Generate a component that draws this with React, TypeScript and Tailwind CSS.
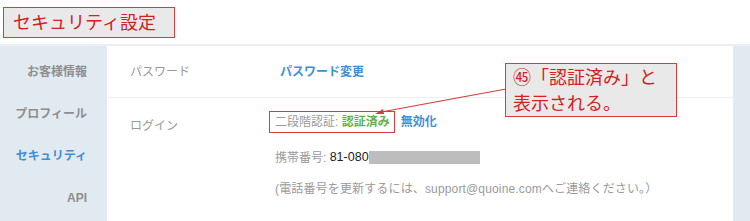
import React from 'react'

const jp = { fontFamily: '"Liberation Sans", "Noto Sans CJK JP", sans-serif' }

const navItems = [
  { label: 'お客様情報', active: false },
  { label: 'プロフィール', active: false },
  { label: 'セキュリティ', active: true },
  { label: 'API', active: false },
]

const App: React.FC = () => {
  return (
    <div className="relative w-[750px] h-[221px] overflow-hidden bg-white" style={jp}>
      {/* page title (annotated) */}
      <div className="h-[44px] pt-[7px] pl-[3px]">
        <div className="w-[172px] h-[31px] border border-[#d93b3b] bg-[#e9e9e9] flex items-center pl-[9px] text-[18px] text-[#d42020] leading-none">
          セキュリティ設定
        </div>
      </div>

      <div className="flex h-[177px] border-t-2 border-[#eceef1]">
        {/* sidebar */}
        <div className="w-[107px] bg-[#e2eaf1] flex flex-col items-end pr-[20px] pt-[5px]">
          {navItems.map((item) => (
            <div
              key={item.label}
              className={`h-[42px] flex items-center text-[12px] font-bold ${
                item.active ? 'text-[#3d8fd8]' : 'text-[#8e8e8e]'
              }`}
            >
              {item.label}
            </div>
          ))}
        </div>

        {/* content */}
        <div className="w-[626px] bg-white">
          <div className="h-[52px] flex items-center border-b border-[#eef0f2] pl-[23px] text-[12px]">
            <div className="w-[150px] text-[#9a9a9a]">パスワード</div>
            <div className="text-[#3d8fd8] font-bold">パスワード変更</div>
          </div>
          <div className="flex pl-[23px] pt-[13px] text-[12px]">
            <div className="w-[139px] pt-[6px] text-[#9a9a9a]">ログイン</div>
            <div className="flex flex-col">
              <div className="h-[22px] flex items-center">
                <span className="h-[22px] flex items-center border border-[#d93b3b] pl-[5px] pr-[4px]">
                  <span className="text-[#9a9a9a]">二段階認証:&nbsp;</span>
                  <span className="text-[#5fb34a] font-bold">認証済み</span>
                </span>
                <span className="ml-[6px] text-[#3d8fd8] font-bold">無効化</span>
              </div>
              <div className="h-[31px] mt-[9px] flex items-center pl-[6px]">
                <span className="text-[#9a9a9a]">携帯番号:&nbsp;</span>
                <span className="text-[#222] text-[12.5px]">81-080</span>
                <span className="w-[111px] h-[13px] bg-[#bdbdbd]" />
              </div>
              <div className="h-[31px] flex items-center pl-[6px] text-[#9a9a9a] tracking-[0.15px]">
                (電話番号を更新するには、support@quoine.comへご連絡ください。）
              </div>
            </div>
          </div>
        </div>

        <div className="flex-1 bg-[#e2eaf1]" />
      </div>

      {/* callout */}
      <svg className="absolute left-0 top-0 pointer-events-none" width="750" height="221">
        <line x1="506" y1="89" x2="381" y2="112" stroke="#d93b3b" strokeWidth="1.2" />
        <polygon points="375,114 383,109 384,114" fill="#d93b3b" />
      </svg>
      <div className="absolute left-[505px] top-[63px] w-[172px] h-[54px] border border-[#d93b3b] bg-[#e9e9e9] pl-[7px] pt-[1px] text-[18px] leading-[26px] text-[#d42020]">
        <div>㊺「認証済み」と</div>
        <div>表示される。</div>
      </div>
    </div>
  )
}

export default App
